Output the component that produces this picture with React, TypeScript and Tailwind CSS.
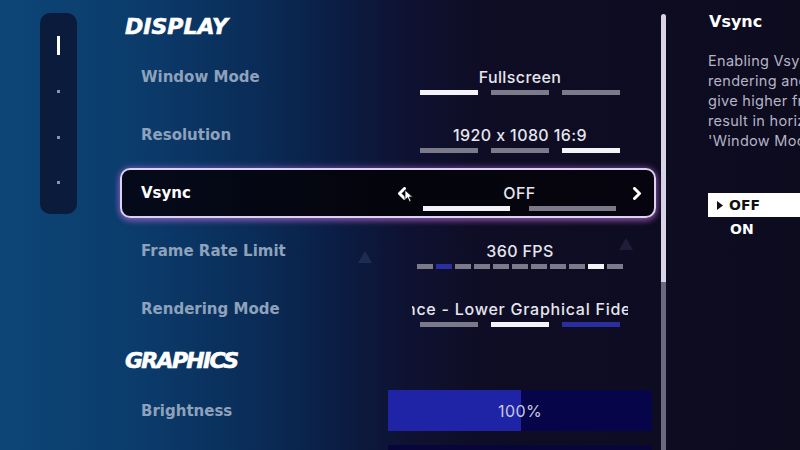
import React from "react";

const LABEL = "font-['DejaVu_Sans',sans-serif] font-bold text-[15px] leading-[20px]";
const VALUE = "font-['Inter',sans-serif] font-medium text-[16px] leading-[20px] tracking-[0.4px] text-[#e6e6ee] [font-feature-settings:'calt'_0]";

function Seg({ c, w }: { c: "g" | "w" | "b"; w: string }) {
  const color = c === "w" ? "bg-[#f4f4f8]" : c === "b" ? "bg-[#2a2e9e]" : "bg-[#7a7a8a]";
  return <div className={`h-[5px] ${w} ${color}`} />;
}

function Row({ label, value, segs }: { label: string; value: React.ReactNode; segs: React.ReactNode }) {
  return (
    <div className="h-[58px] shrink-0 flex items-center">
      <div className={`w-[264px] pl-[21px] ${LABEL} text-[#8ea2bb]`}>{label}</div>
      <div className="w-[272px] mt-[8px] flex flex-col items-center gap-[3px]">
        <div className={VALUE + " whitespace-nowrap"}>{value}</div>
        {segs}
      </div>
    </div>
  );
}

export default function App() {
  return (
    <div className="relative w-[800px] h-[450px] overflow-hidden flex bg-[linear-gradient(90deg,#0c4677_0%,#0b3b6b_18%,#0a2b56_33%,#0b1c42_43%,#0e1231_51%,#0f0d25_60%,#0d0b1e_100%)]">
      {/* faint decorative triangles */}
      <svg className="absolute left-[358px] top-[251px] opacity-40" width="14" height="12" viewBox="0 0 14 12">
        <path d="M7 0 L14 12 L0 12 Z" fill="#3a4a70" />
      </svg>
      <svg className="absolute left-[619px] top-[238px] opacity-40" width="14" height="12" viewBox="0 0 14 12">
        <path d="M7 0 L14 12 L0 12 Z" fill="#3a3a5a" />
      </svg>

      {/* sidebar */}
      <div className="pl-[40px] pt-[13px] shrink-0">
        <div className="w-[37px] h-[201px] rounded-[10px] bg-[#0a1b3b] flex flex-col items-center">
          <div className="mt-[23px] w-[3px] h-[19px] bg-white shrink-0" />
          <div className="mt-[35px] w-[3px] h-[3px] bg-[#8595ad] shrink-0" />
          <div className="mt-[43px] w-[3px] h-[3px] bg-[#8595ad] shrink-0" />
          <div className="mt-[42px] w-[3px] h-[3px] bg-[#8595ad] shrink-0" />
        </div>
      </div>

      {/* main column */}
      <div className="ml-[43px] w-[536px] shrink-0 flex flex-col">
        <div className="h-[48px] shrink-0 flex items-center pl-[5px] pt-[6px]">
          <span className="font-['DejaVu_Sans',sans-serif] font-bold italic text-[22px] leading-none text-white [-webkit-text-stroke:0.6px_white]">
            DISPLAY
          </span>
        </div>

        <Row
          label="Window Mode"
          value="Fullscreen"
          segs={
            <div className="flex gap-[13px]">
              <Seg c="w" w="w-[58px]" />
              <Seg c="g" w="w-[58px]" />
              <Seg c="g" w="w-[58px]" />
            </div>
          }
        />
        <Row
          label="Resolution"
          value="1920 x 1080 16:9"
          segs={
            <div className="flex gap-[13px]">
              <Seg c="g" w="w-[58px]" />
              <Seg c="g" w="w-[58px]" />
              <Seg c="w" w="w-[58px]" />
            </div>
          }
        />

        {/* Vsync selected row */}
        <div className="h-[58px] shrink-0 py-[4px] relative">
          <div className="h-[50px] rounded-[10px] border-2 border-[#ddd0f2] bg-[linear-gradient(90deg,#050a1a_0%,#04040c_50%,#06050f_100%)] shadow-[0_0_7px_rgba(190,120,240,0.55),0_3px_6px_rgba(200,110,220,0.45)] flex items-center">
            <div className={`w-[262px] pl-[19px] ${LABEL} text-white`}>Vsync</div>
            <div className="w-[270px] flex items-center">
              <svg className="ml-[13px] shrink-0" width="10" height="13" viewBox="0 0 10 13">
                <path d="M7.5 1.5 L2.5 6.5 L7.5 11.5" fill="none" stroke="white" strokeWidth="3" strokeLinejoin="round" strokeLinecap="round" />
              </svg>
              <div className="flex-1 mt-[8px] flex flex-col items-center gap-[3px]">
                <div className={VALUE}>OFF</div>
                <div className="flex gap-[19px]">
                  <Seg c="w" w="w-[87px]" />
                  <Seg c="g" w="w-[87px]" />
                </div>
              </div>
              <svg className="mr-[12px] shrink-0" width="10" height="13" viewBox="0 0 10 13">
                <path d="M2.5 1.5 L7.5 6.5 L2.5 11.5" fill="none" stroke="white" strokeWidth="3" strokeLinejoin="round" strokeLinecap="round" />
              </svg>
            </div>
          </div>
          {/* mouse cursor */}
          <svg className="absolute left-[284px] top-[25px]" width="10" height="14" viewBox="0 0 10 14">
            <path d="M1 1 L1 11 L3.6 8.6 L5.4 12.6 L7 11.9 L5.3 8 L8.6 8 Z" fill="white" stroke="#111" strokeWidth="0.8" />
          </svg>
        </div>

        <Row
          label="Frame Rate Limit"
          value="360 FPS"
          segs={
            <div className="flex gap-[3px]">
              {["g", "b", "g", "g", "g", "g", "g", "g", "g", "w", "g"].map((c, i) => (
                <Seg key={i} c={c as "g" | "w" | "b"} w="w-[16px]" />
              ))}
            </div>
          }
        />
        <Row
          label="Rendering Mode"
          value={
            <div className="w-[216px] overflow-hidden whitespace-nowrap">
              <span className="inline-block ml-[-6px] tracking-[0.75px]">nce - Lower Graphical Fidelity</span>
            </div>
          }
          segs={
            <div className="flex gap-[13px]">
              <Seg c="g" w="w-[58px]" />
              <Seg c="w" w="w-[58px]" />
              <Seg c="b" w="w-[58px]" />
            </div>
          }
        />

        <div className="h-[46px] shrink-0 flex items-center pl-[5px]">
          <span className="font-['DejaVu_Sans',sans-serif] font-bold italic text-[22px] leading-none text-white tracking-[-1.7px] [-webkit-text-stroke:0.6px_white]">
            GRAPHICS
          </span>
        </div>

        <div className="h-[53px] shrink-0 flex items-center">
          <div className={`w-[264px] pl-[21px] ${LABEL} text-[#8ea2bb]`}>Brightness</div>
          <div className="ml-[4px] w-[264px] h-[41px] bg-[#07054a] relative flex">
            <div className="w-[133px] h-full bg-[#1f23a6]" />
            <div className="absolute inset-0 flex items-center justify-center font-['Inter',sans-serif] text-[16px] tracking-[0.4px] text-[#c9c9e4]">
              100%
            </div>
          </div>
        </div>
        <div className="flex mt-[8px] shrink-0">
          <div className="ml-[268px] w-[264px] h-[41px] bg-[#07053a]" />
        </div>
      </div>

      {/* scrollbar */}
      <div className="ml-[5px] mt-[14px] w-[5px] shrink-0 flex flex-col">
        <div className="h-[268px] shrink-0 rounded-t-full bg-[#d8d4e6]" />
        <div className="flex-1 bg-[#6b6880]" />
      </div>

      {/* right info panel */}
      <div className="ml-[42px] pt-[12px] w-[300px] shrink-0 flex flex-col">
        <div className="font-['DejaVu_Sans',sans-serif] font-bold text-[16px] leading-[20px] text-white pl-[1px]">Vsync</div>
        <div className="mt-[19px] font-['Inter',sans-serif] text-[14.5px] leading-[20px] tracking-[0.3px] text-[#b5b3c6] whitespace-nowrap">
          <div>Enabling Vsync will reduce screen tearing</div>
          <div>rendering and display refresh rate.</div>
          <div>give higher frame rates and lower</div>
          <div>result in horizontal screen tearing.</div>
          <div>'Window Mode' is set to Fullscreen.</div>
        </div>
        <div className="mt-[42px] h-[24px] shrink-0 bg-white flex items-center pl-[9px] gap-[6px]">
          <svg width="6" height="9" viewBox="0 0 6 9">
            <path d="M0 0 L6 4.5 L0 9 Z" fill="#111" />
          </svg>
          <span className="font-['DejaVu_Sans',sans-serif] font-bold text-[14px] text-[#111]">OFF</span>
        </div>
        <div className="h-[24px] shrink-0 flex items-center pl-[22px]">
          <span className="font-['DejaVu_Sans',sans-serif] font-bold text-[14px] text-white">ON</span>
        </div>
      </div>
    </div>
  );
}
